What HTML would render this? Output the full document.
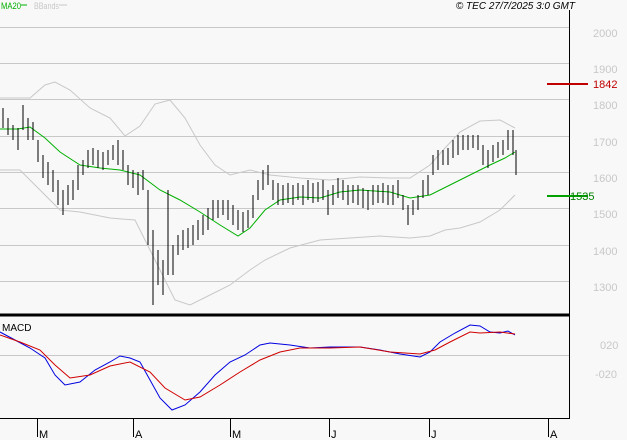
<!DOCTYPE html>
<html><head><style>
body{margin:0;background:#f8f8f8;}
svg{display:block;font-family:"Liberation Sans",sans-serif;}
</style></head><body>
<svg width="627" height="440" viewBox="0 0 627 440">
<rect width="627" height="440" fill="#f8f8f8"/>
<g stroke="#c8c8c8" stroke-width="1">
<line x1="0" y1="27.5" x2="569" y2="27.5"/><line x1="0" y1="63.5" x2="569" y2="63.5"/>
<line x1="0" y1="99.5" x2="569" y2="99.5"/><line x1="0" y1="136.5" x2="569" y2="136.5"/>
<line x1="0" y1="172.5" x2="569" y2="172.5"/><line x1="0" y1="208.5" x2="569" y2="208.5"/>
<line x1="0" y1="245.5" x2="569" y2="245.5"/><line x1="0" y1="281.5" x2="569" y2="281.5"/>
<line x1="0" y1="355.5" x2="569" y2="355.5"/>
</g>
<g font-size="11" fill="#c8c8c8">
<text x="593" y="37">2000</text><text x="593" y="73">1900</text><text x="593" y="109">1800</text>
<text x="593" y="146">1700</text><text x="593" y="182">1600</text><text x="593" y="218">1500</text>
<text x="593" y="255">1400</text><text x="593" y="291">1300</text>
<text x="600" y="349">020</text><text x="595" y="378">-020</text>
</g>
<polyline fill="none" stroke="#c8c8c8" points="0,98 15,98 30,98 45,85 55,82 70,90 90,108 110,118 125,136 140,126 155,104 170,100 185,118 200,145 215,165 230,175 250,170 270,175 300,178 330,180 360,177 390,178 410,178 430,165 445,148 460,132 480,121 500,120 515,128"/>
<polyline fill="none" stroke="#c8c8c8" points="0,170 20,170 40,190 60,210 80,212 110,218 135,220 150,250 165,280 175,300 190,305 210,295 230,285 250,270 265,260 290,248 320,240 350,238 380,236 410,238 430,236 445,230 460,228 480,222 500,210 515,195"/>
<polyline fill="none" stroke="#00b000" points="0,129 18,129 30,127 45,138 60,152 80,165 100,168 120,170 140,175 160,190 180,200 200,212 220,225 238,236 250,228 265,210 280,200 300,197 320,198 340,192 360,190 390,192 410,198 430,195 450,185 470,175 490,165 505,158 515,152"/>
<path stroke="#000" stroke-width="1" fill="none" d="M3 108V128M8 118V135M13 125V140M18 128V150M23 105V130M28 118V140M33 122V140M38 140V162M43 155V178M48 162V185M53 170V192M58 180V205M63 190V215M68 185V205M73 180V200M78 165V190M83 160V175M88 150V168M93 148V165M98 150V168M103 152V170M108 150V165M113 145V160M118 140V165M123 150V170M128 165V185M133 170V188M138 172V195M143 170V190M148 190V245M153 230V305M158 250V285M163 260V295M168 190V275M173 245V275M178 235V255M183 230V250M188 228V248M193 225V245M198 220V240M203 215V235M208 208V230M213 200V220M218 200V218M223 200V215M228 200V220M233 205V225M238 210V230M243 212V232M248 210V228M253 195V218M258 180V200M263 170V190M268 165V185M273 180V200M278 183V205M283 185V205M288 183V203M293 185V205M298 183V200M303 185V205M308 180V200M313 183V203M318 182V202M323 180V200M328 190V215M333 185V205M338 178V198M343 180V200M348 185V205M353 185V203M358 185V205M363 188V208M368 190V210M373 185V205M378 185V203M383 183V203M388 185V205M393 185V205M398 180V198M403 195V210M408 205V225M413 200V215M418 195V210M423 180V198M428 175V195M433 155V175M438 150V170M443 150V165M448 148V165M453 140V158M458 135V155M463 135V150M468 135V150M473 135V148M478 135V150M483 145V165M488 150V168M493 145V162M498 142V158M503 140V155M508 130V150M513 130V155M516 150V175"/>
<g stroke="#000"><line x1="569.5" y1="10" x2="569.5" y2="418"/><line x1="0" y1="315" x2="570" y2="315" stroke-width="3"/><line x1="0" y1="418.5" x2="570" y2="418.5"/>
<line x1="37.5" y1="418" x2="37.5" y2="437"/><line x1="133.5" y1="418" x2="133.5" y2="437"/><line x1="230.5" y1="418" x2="230.5" y2="437"/><line x1="329.5" y1="418" x2="329.5" y2="437"/><line x1="429.5" y1="418" x2="429.5" y2="437"/><line x1="548.5" y1="418" x2="548.5" y2="437"/></g>
<g font-size="11" fill="#000"><text x="39" y="438">M</text><text x="135" y="438">A</text><text x="232" y="438">M</text><text x="331" y="438">J</text><text x="431" y="438">J</text><text x="550" y="438">A</text>
<text x="2" y="331" font-size="10">MACD</text></g>
<line x1="547" y1="84" x2="588" y2="84" stroke="#c00000" stroke-width="2"/>
<text x="593" y="88" font-size="11" fill="#c00000">1842</text>
<line x1="547" y1="196" x2="588" y2="196" stroke="#00a000" stroke-width="2"/>
<text x="570" y="200" font-size="11" fill="#008000">1535</text>
<polyline fill="none" stroke="#0000e0" points="0,332 15,340 30,348 45,358 55,375 65,385 80,382 95,370 110,362 120,356 130,358 140,362 150,380 160,398 172,410 185,405 200,392 215,375 230,362 245,355 260,345 270,343 290,345 310,348 330,347 360,347 380,350 400,354 420,357 430,352 440,342 455,333 470,325 480,326 490,332 500,333 508,331 515,335"/>
<polyline fill="none" stroke="#d00000" points="0,335 20,342 40,350 55,365 70,378 90,375 110,366 130,362 150,372 165,388 185,400 200,397 220,385 240,372 260,360 280,352 300,348 330,348 360,347 390,352 420,354 435,350 450,342 470,332 480,333 500,332 515,334"/>
<text x="1" y="9" font-size="9" fill="#00b000" textLength="20" lengthAdjust="spacingAndGlyphs">MA20</text><line x1="21" y1="5" x2="27" y2="5" stroke="#00b000"/>
<text x="34" y="9" font-size="9" fill="#c8c8c8" textLength="25" lengthAdjust="spacingAndGlyphs">BBands</text><line x1="59" y1="5" x2="67" y2="5" stroke="#c8c8c8"/>
<text x="575" y="9" font-size="10" font-style="italic" fill="#000" text-anchor="end">© TEC 27/7/2025 3:0 GMT</text>
</svg>
</body></html>
